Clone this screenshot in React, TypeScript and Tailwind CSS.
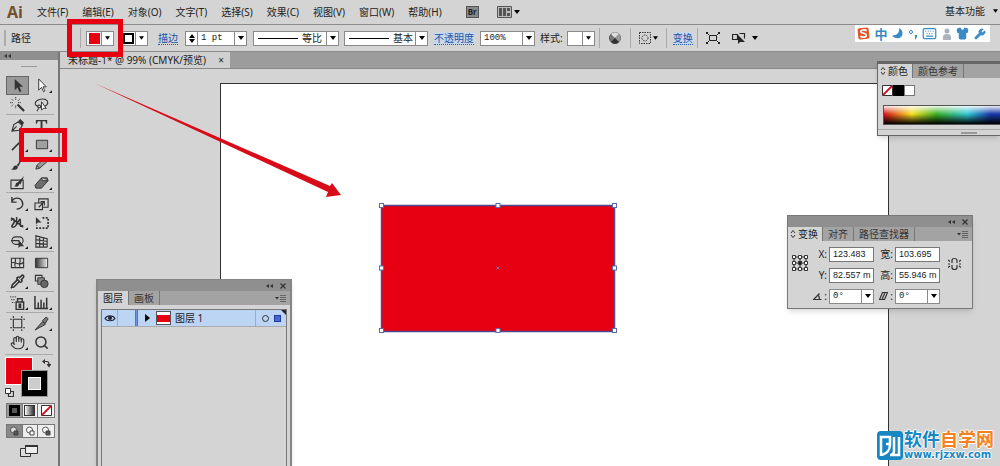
import { useState, type ReactNode } from "react";
import { Hand, Keyboard, Pipette, Search, Shirt, Wrench } from "lucide-react";
import clsx from "clsx";

const MENUS = ["文件(F)", "编辑(E)", "对象(O)", "文字(T)", "选择(S)", "效果(C)", "视图(V)", "窗口(W)", "帮助(H)"];

type Tool = { name: string; icon: ReactNode; flyout?: boolean };

const line = { fill: "none", stroke: "currentColor", strokeWidth: 1.2 };

const TOOL_GROUPS: Tool[][] = [
  [
    { name: "选择", icon: <path d="M5 1v12l3-3 2.2 5 2-1-2.2-4.6h4z" fill="currentColor" /> },
    { name: "直接选择", flyout: true, icon: <path d="M5 1v12l3-3 2 4.6 1.6-.8-2-4.4H13z" fill="#fff" stroke="currentColor" /> },
    {
      name: "魔棒",
      icon: (
        <>
          <path d="m8 8 7 7" stroke="currentColor" strokeWidth="2.4" />
          <path d="M6 0v3m0 6v3M0 6h3m5.5 0h3M1.5 2l2 2m5 0 2-2m-9 8 2-2" stroke="currentColor" strokeDasharray="1.5 .6" />
        </>
      ),
    },
    {
      name: "套索",
      icon: (
        <>
          <path d="M4 10C1 9 0 6 3 4s9-3 11 0-1 6-4 6M4 10c0-2 3-2 3 0s-3 2-3 0Zm1 1c0 2-1 3-2 4" {...line} />
          <path d="M8 5v9l2-2 3 .2z" fill="#fff" stroke="currentColor" />
        </>
      ),
    },
  ],
  [
    {
      name: "钢笔",
      flyout: true,
      icon: (
        <>
          <path d="m2 14 2-7 5-3 4 4-3 5-8 1Zm0 0 5-5" {...line} />
          <path d="m9 3 2-2 4 4-2 3z" fill="currentColor" />
        </>
      ),
    },
    { name: "文字", flyout: true, icon: <path d="M2 2h12v4h-1l-1-2.5H9V13l2 .5v1H5v-1l2-.5V3.5H4L3 6H2z" fill="currentColor" /> },
    { name: "直线段", flyout: true, icon: <path d="m2 14 12-12" stroke="currentColor" strokeWidth="1.6" /> },
    { name: "矩形", flyout: true, icon: <path d="M2.5 3.5h12v9h-12z" fill="#a0a0a0" stroke="currentColor" /> },
    {
      name: "画笔",
      icon: (
        <>
          <path d="M1 14c3 0 2-4 5-4 3 0 3 3 1 4s-4 1-6 0Z" fill="currentColor" />
          <path d="m7 10 7-9-5 10z" fill="currentColor" />
        </>
      ),
    },
    { name: "铅笔", flyout: true, icon: <path d="m2 14 1-4 9-8 3 3-9 8-4 1Zm1-4 3 3" fill="#999" stroke="currentColor" /> },
    {
      name: "斑点画笔",
      icon: (
        <>
          <path d="M1 5.5h13v9H1z" {...line} />
          <path d="M4 12c3 0 1-4 4-4s2 4-1 4.5zM8 8l7-7-4 9z" fill="currentColor" />
        </>
      ),
    },
    { name: "橡皮擦", flyout: true, icon: <path d="m1 11 7-8h6l1 3-7 8H2zM8 3l1 3h6" fill="#6d6d6d" stroke="currentColor" /> },
  ],
  [
    { name: "旋转", flyout: true, icon: <path d="M2 6C4 1 11 1 13 6s-2 8-6 8M2 1v5.5h5" {...line} strokeWidth="1.5" /> },
    { name: "比例缩放", flyout: true, icon: <path d="M1 7.5h8v7H1zM5 7V3h10v9H9m-4 0 6-6m-4 0h4v4" {...line} /> },
    { name: "宽度", flyout: true, icon: <path d="M1 6c3-5 5 1 2 4s1 5 4 0 4-8 4-3-1 6 3 4M1 3l13 10M7 2v9" {...line} strokeWidth="1.6" /> },
    {
      name: "自由变换",
      icon: (
        <>
          <path d="M2 2v8l2-2h4z" fill="currentColor" />
          <path d="M9 3h6v11H3v-3" {...line} strokeWidth="1.8" strokeDasharray="2 1.5" />
        </>
      ),
    },
    {
      name: "形状生成器",
      flyout: true,
      icon: (
        <>
          <path d="M6 3a4 4 0 1 0 0 8h4a4 4 0 0 0 0-8zM1 7h9" {...line} />
          <path d="M9 6v9l2-2h4z" fill="currentColor" />
        </>
      ),
    },
    { name: "透视网格", flyout: true, icon: <path d="M2 1v13h12M6 2v12M10 4v10M2 2l12 3v9M2 6l12 2M2 10l12 1" {...line} /> },
  ],
  [
    { name: "网格", icon: <path d="M1.5 3.5h13v10h-13zM1 9c4-4 8 4 13-1M5 3c3 4-2 6 1 11m4-11c3 4-2 6 1 11" {...line} /> },
    { name: "渐变", icon: <path d="M1.5 3.5h13v10h-13z" fill="url(#ramp)" stroke="currentColor" /> },
    { name: "吸管", flyout: true, icon: <Pipette width={16} height={16} strokeWidth={2.4} /> },
    {
      name: "混合",
      icon: (
        <>
          <path d="M1.5 1.5h7v6h-7z" {...line} />
          <path d="M4 4h7v7H4z" fill="#888" stroke="currentColor" />
          <circle cx="11" cy="10.5" r="4" fill="#666" stroke="currentColor" />
        </>
      ),
    },
  ],
  [
    {
      name: "符号喷枪",
      flyout: true,
      icon: (
        <>
          <path d="M6.5 7.5h8v8h-8zM8 7V4h5v3" {...line} strokeWidth="1.5" />
          <path d="M9 9h3v5H9z" fill="currentColor" />
          <path d="M0 2h7M1 5h5M2 8h3" stroke="currentColor" strokeDasharray="1.5 1" />
        </>
      ),
    },
    { name: "柱形图", flyout: true, icon: <path d="M1 1v13.5h14M4.5 14V8M7.5 14V5m3 9V8m3 6V3" {...line} strokeWidth="1.6" /> },
  ],
  [
    { name: "画板", icon: <path d="M3.5 3.5h9v9h-9zM3.5 0v2m9-2v2m-9 12v2m9-2v2M0 3.5h2m12 0h2m-16 9h2m12 0h2" {...line} /> },
    { name: "切片", flyout: true, icon: <path d="m1 15 8-9 3 3zM9 5l4-4 2 2-3 5z" fill="#777" stroke="currentColor" /> },
    { name: "抓手", flyout: true, icon: <Hand width={16} height={16} strokeWidth={1.8} /> },
    { name: "缩放", icon: <Search width={16} height={16} strokeWidth={2.4} /> },
  ],
];

function Triangle({ className }: { className?: string }) {
  return (
    <svg viewBox="0 0 6 4" className={clsx("h-1 w-1.5 shrink-0 fill-black", className)}>
      <path d="M0 0h6L3 4z" />
    </svg>
  );
}

function Combo({ label, value, className, rule }: { label: string; value: string; className: string; rule?: boolean }) {
  return (
    <div className={clsx("flex h-[15px] shrink-0 items-stretch border border-[#8a8a8a] bg-white", className)}>
      {rule && <span className="my-auto ml-1 h-px w-10 shrink-0 bg-black" />}
      <select
        aria-label={label}
        className={clsx(
          "min-w-0 flex-1 appearance-none bg-transparent leading-3 outline-none",
          rule ? "pl-1 text-[10px]" : "pl-[3px] font-['Liberation_Mono',monospace] text-[9px]",
        )}
      >
        <option>{value}</option>
      </select>
      <span className="flex w-3 shrink-0 items-center justify-center border-l border-[#8a8a8a]">
        <Triangle />
      </span>
    </div>
  );
}

function SwatchButton({ label, children }: { label: string; children?: ReactNode }) {
  return (
    <button aria-label={label} className="flex h-[15px] w-7 shrink-0 border border-[#8a8a8a] bg-white">
      <span className="flex h-full flex-1 items-center justify-center">{children}</span>
      <span className="flex h-full w-3 items-center justify-center border-l border-[#8a8a8a]">
        <Triangle className="w-[5px]" />
      </span>
    </button>
  );
}

function Divider() {
  return <span className="h-5 w-px shrink-0 bg-[#aaa]" />;
}

function MenuBar() {
  return (
    <header className="flex h-[25px] shrink-0 items-center border-b border-[#8c8c8c] pr-0.5">
      <span className="w-[30px] pl-[7px] font-['Open_Sans',sans-serif] text-base font-bold text-[#71502d]">Ai</span>
      <nav className="flex gap-[14px] pl-[7px]">
        {MENUS.map((m) => (
          <button key={m} className="whitespace-nowrap">
            {m}
          </button>
        ))}
      </nav>
      <button className="ml-6 flex h-3 w-[13px] items-center justify-center border border-[#555] bg-[#888] text-[8px] font-bold text-[#222]">Br</button>
      <button aria-label="排列文档" className="ml-[18px] flex items-center gap-0.5">
        <svg viewBox="0 0 15 12" className="h-3 w-[15px]">
          <path d="M.5.5h14v11H.5z" fill="#bbb" stroke="#555" />
          <path d="M2 2h3v8H2zm4 0h3v8H6zm4 0h3v3h-3zm0 5h3v3h-3z" fill="#555" />
        </svg>
        <Triangle />
      </button>
      <button className="ml-auto flex items-center gap-2 pb-0.5">
        基本功能
        <Triangle className="w-[5px]" />
      </button>
    </header>
  );
}

function ControlBar() {
  return (
    <div className="flex h-[27px] shrink-0 items-center border-b border-[#8c8c8c] whitespace-nowrap">
      <span className="ml-1 h-4 w-0.5 bg-[#aaa]" />
      <span className="w-[74px] pl-[5px]">路径</span>
      <Divider />
      <div className="flex gap-1.5 pl-[5px]">
        <SwatchButton label="填色">
          <span className="size-[11px] bg-[#e60012]" />
        </SwatchButton>
        <SwatchButton label="描边颜色">
          <span className="size-[11px] border-2 border-black bg-white" />
        </SwatchButton>
      </div>
      <a href="#stroke" className="ml-2.5 border-b border-dotted border-[#2a5db0] leading-3 text-[#1d54a8]">
        描边
      </a>
      <button
        aria-label="调整描边粗细"
        className="ml-[7px] flex h-[15px] w-3 shrink-0 flex-col items-center justify-between border border-r-0 border-[#8a8a8a] bg-white py-0.5"
      >
        <Triangle className="rotate-180" />
        <Triangle />
      </button>
      <Combo label="描边粗细" value="1 pt" className="w-[50px]" />
      <Combo label="变量宽度" value="等比" className="ml-1.5 w-[86px]" rule />
      <Combo label="画笔定义" value="基本" className="ml-[5px] w-[84px]" rule />
      <a href="#opacity" className="ml-1.5 border-b border-dotted border-[#2a5db0] bg-[#c7d7ec] leading-3 text-[#1d54a8]">
        不透明度
      </a>
      <Combo label="不透明度值" value="100%" className="ml-1.5 w-[55px]" />
      <span className="mr-1 ml-[5px]">样式:</span>
      <SwatchButton label="图形样式" />
      <div className="flex items-center gap-2 pl-1">
        <Divider />
        <button aria-label="重新着色图稿">
          <svg viewBox="0 0 14 14" className="size-[14px]">
            <circle cx="7" cy="7" r="5.5" fill="#777" stroke="#555" />
            <path d="M7 7 3 3a5.500 5.500 0 0 1 8 0z" fill="#ddd" />
            <path d="m7 7 4-4a5.500 5.500 0 0 1 0 8z" fill="#999" />
            <path d="m7 7 4 4a5.500 5.500 0 0 1-8 0z" fill="#333" />
          </svg>
        </button>
        <Divider />
        <button aria-label="选择类似对象" className="flex items-center gap-0.5">
          <svg viewBox="0 0 12 12" className="size-3">
            <path d="M.5.5h11v11H.5z" fill="none" stroke="#333" strokeDasharray="1.5 1" />
            <circle cx="6" cy="6" r="3" fill="none" stroke="#333" strokeDasharray="1.5 1" />
          </svg>
          <Triangle className="w-[5px]" />
        </button>
        <Divider />
      </div>
      <a href="#transform" className="mr-1 ml-1.5 border-b border-dotted border-[#2a5db0] bg-[#c7d7ec] leading-3 text-[#1d54a8]">
        变换
      </a>
      <Divider />
      <button aria-label="隔离选中的对象" className="ml-2">
        <svg viewBox="0 0 14 12" className="h-3 w-[14px]">
          <path d="M3.5 3.5h7v5h-7zM1 1l2 2m10-2-2 2M1 11l2-2m10 2-2-2" {...line} strokeWidth="1" />
          <path d="M0 0h2v2H0zm12 0h2v2h-2zM0 10h2v2H0zm12 0h2v2h-2z" fill="#222" />
        </svg>
      </button>
      <button aria-label="编辑剪切" className="ml-3 flex items-center gap-1.5">
        <svg viewBox="0 0 14 12" className="h-3 w-[14px]">
          <path d="M.5 2.500h5v5h-5zM7.500 1.500h5v5" {...line} />
          <path d="M6 3v9l2-2h5z" fill="#222" />
        </svg>
        <Triangle />
      </button>
    </div>
  );
}

function ToolPanel() {
  const [active, setActive] = useState("选择");
  return (
    <aside className="flex w-[60px] shrink-0 flex-col border-r-2 border-[#777]">
      <div className="flex h-2 items-center bg-[#8f8f8f] pl-1 text-[#333]">
        <CollapseIcon />
      </div>
      <span className="mx-auto mt-1.5 mb-[9px] h-px w-4 bg-[#999]" />
      <div className="pr-1 pl-1.5">
        {TOOL_GROUPS.map((group, i) => (
          <div key={i} className={clsx("grid grid-cols-2", i > 0 && "border-t border-[#aaa] pt-px")}>
            {group.map((tool) => (
              <button
                key={tool.name}
                aria-label={tool.name}
                onClick={() => setActive(tool.name)}
                className={clsx(
                  "flex h-[19px] w-[23px] items-center justify-center text-[#333]",
                  active === tool.name && "border border-[#666] bg-[#999]",
                )}
              >
                <svg viewBox="0 0 21 16" className="h-[15px] w-5 shrink-0">
                  <g transform="translate(2 0)">{tool.icon}</g>
                  {tool.flyout && <path d="M21 13v3h-3z" fill="#111" />}
                </svg>
              </button>
            ))}
          </div>
        ))}
      </div>

      <div className="relative mx-[5px] mt-0.5 h-[43px] border-t border-[#aaa]">
        <button aria-label="填色" className="absolute top-0.5 left-0 size-7 border border-white bg-[#e60012]" />
        <button aria-label="描边" className="absolute top-[15px] left-4 size-[27px] border border-[#999] bg-black p-1.5">
          <span className="block size-full border border-white bg-[#ccc]" />
        </button>
        <svg viewBox="0 0 9 9" className="absolute top-1 right-0.5 size-[9px] text-[#333]">
          <path d="M2 2.500h3q2 0 2 3" {...line} />
          <path d="M3 0 0 2.500 3 5zM4.500 5h5L7 8.500z" fill="currentColor" />
        </svg>
        <svg viewBox="0 0 9 9" className="absolute bottom-0 left-0 size-[9px] text-[#333]">
          <path d="M3.500 3.500h5v5h-5z" {...line} />
          <path d="M.5.5h5v5h-5z" fill="#fff" stroke="#333" />
        </svg>
      </div>

      <div className="mx-1.5 mt-1.5 grid h-[15px] w-[49px] grid-cols-3 divide-x divide-[#777] border border-[#777] bg-[#eee]">
        <button aria-label="颜色" className="flex items-center justify-center bg-[#999]">
          <span className="size-[11px] border-[3px] border-black bg-[#555]" />
        </button>
        <button aria-label="渐变" className="flex items-center justify-center">
          <span className="size-[11px] border border-[#333] bg-linear-to-r from-white to-[#333]" />
        </button>
        <button aria-label="无" className="flex items-center justify-center">
          <NoneSwatch />
        </button>
      </div>
      <div className="mx-1.5 mt-1.5 grid h-[14px] w-[49px] grid-cols-3 divide-x divide-[#777] border border-[#777] bg-[#eee]">
        {["正常绘图", "背面绘图", "内部绘图"].map((mode, i) => (
          <button key={mode} aria-label={mode} className={clsx("flex items-center justify-center", i === 0 && "bg-[#888]")}>
            <svg viewBox="0 0 10 10" className="size-[10px]">
              <circle cx="4.500" cy="4" r="3" fill={i === 0 ? "#ddd" : "#fff"} stroke="#555" />
              <path d="M5 5h4v4H5z" fill={i === 1 ? "#fff" : "#555"} stroke="#444" />
            </svg>
          </button>
        ))}
      </div>
      <button aria-label="更改屏幕模式" className="mx-auto mt-1.5">
        <svg viewBox="0 0 18 14" className="h-[14px] w-[18px] text-[#333]">
          <path d="M.5 4.500h10v8H.5z" fill="#ddd" stroke="currentColor" />
          <path d="M5.500 1.500h12v8h-12z" fill="#eee" stroke="currentColor" />
          <path d="M5 1h13v2H5z" fill="currentColor" />
        </svg>
      </button>
    </aside>
  );
}

function NoneSwatch() {
  return (
    <svg viewBox="0 0 11 11" className="size-[11px]">
      <path d="M.5.5h10v10H.5z" fill="#fff" stroke="#333" />
      <path d="m1 10 9-9" stroke="#d01020" strokeWidth="1.8" />
    </svg>
  );
}

function CollapseIcon() {
  return (
    <svg viewBox="0 0 7 4" className="h-1 w-[7px] fill-current">
      <path d="M3 0v4L0 2zM7 0v4L4 2z" />
    </svg>
  );
}

function PanelTitle() {
  return (
    <div className="flex h-[11px] items-center justify-end gap-[7px] bg-[#8f8f8f] pr-1 text-[#333]">
      <button aria-label="折叠">
        <CollapseIcon />
      </button>
      <button aria-label="关闭">
        <svg viewBox="0 0 6 6" className="size-1.5">
          <path d="m.5.5 5 5m0-5-5 5" {...line} />
        </svg>
      </button>
    </div>
  );
}

function PanelTabs({ tabs, arrows, menu }: { tabs: string[]; arrows?: boolean; menu?: boolean }) {
  return (
    <div role="tablist" className="flex h-[14px] items-stretch bg-[#a3a3a3]">
      {tabs.map((tab, i) => (
        <button
          key={tab}
          role="tab"
          aria-selected={i === 0}
          className={clsx(
            "flex items-center gap-0.5 border-r border-[#777] leading-3 whitespace-nowrap",
            i === 0 ? "bg-[#d4d4d4]" : "text-[#333]",
            i === 0 && arrows ? "pr-1 pl-0.5" : "px-[5px]",
          )}
        >
          {i === 0 && arrows && (
            <svg viewBox="0 0 6 8" className="h-2 w-1.5">
              <path d="M1 3l2-2.500L5 3M1 5l2 2.500L5 5" fill="none" stroke="#333" />
            </svg>
          )}
          {tab}
        </button>
      ))}
      {menu && (
        <button aria-label="面板菜单" className="mr-1 ml-auto">
          <svg viewBox="0 0 11 7" className="h-[7px] w-[11px]">
            <path d="M0 2h4L2 4.500z" fill="#333" />
            <path d="M5 .5h6M5 2.500h6M5 4.500h6M5 6.500h6" stroke="#666" />
          </svg>
        </button>
      )}
    </div>
  );
}

function LayersPanel() {
  return (
    <section className="absolute top-[279px] bottom-0 left-24 flex w-[196px] flex-col border-2 border-t border-b-0 border-[#858585] bg-[#d4d4d4] shadow-md">
      <PanelTitle />
      <PanelTabs tabs={["图层", "画板"]} menu />
      <div className="mx-[3px] mt-1 flex-1 border border-b-0 border-[#777]">
        <div className="flex h-[17px] items-stretch border-b border-[#aaa] bg-[#bcd5f5]">
          <button aria-label="切换可视性" className="flex w-4 items-center justify-center border-r border-[#93add0]">
            <svg viewBox="0 0 12 8" className="h-2 w-3 text-[#223]">
              <path d="M1 4.500C3 1 9 1 11 4.500 9 7.500 3 7.500 1 4.500Z" {...line} />
              <circle cx="6" cy="4" r="2" fill="currentColor" />
            </svg>
          </button>
          <span className="ml-[17px] w-[3px] border-x border-[#4c74d8] bg-[#6f93e6]" />
          <button aria-label="展开图层" className="flex w-[18px] items-center justify-center">
            <svg viewBox="0 0 5 8" className="h-2 w-[5px]">
              <path d="M0 0v8l5-4z" />
            </svg>
          </button>
          <span className="my-px flex w-[15px] items-center border border-[#555] bg-white">
            <span className="h-[7px] w-full bg-[#e60012]" />
          </span>
          <span className="flex-1 pl-1 leading-4">图层 1</span>
          <button aria-label="定位图层" className="flex w-[19px] items-center justify-center border-l border-[#93add0]">
            <span className="size-[7px] rounded-full border border-[#333]" />
          </button>
          <span className="mt-[5px] size-[7px] border border-[#1d3a9c] bg-[#4668d0]" />
          <svg viewBox="0 0 5 5" className="size-[5px]">
            <path d="M0 0h5v5z" fill="#223" />
          </svg>
        </div>
      </div>
    </section>
  );
}

function Field({ label, value }: { label: string; value: string }) {
  return (
    <label className="flex h-[14px] items-center justify-end gap-0.5">
      <span>{label}:</span>
      <input
        defaultValue={value}
        className="h-[15px] w-[45px] border border-[#777] bg-white pl-[3px] font-['Liberation_Sans',sans-serif] text-[9px] leading-3 outline-none"
      />
    </label>
  );
}

function TransformPanel() {
  return (
    <section className="absolute top-[215px] left-[787px] w-[186px] border border-[#777] bg-[#d4d4d4] shadow-md">
      <PanelTitle />
      <PanelTabs tabs={["变换", "对齐", "路径查找器"]} arrows menu />
      <div className="flex items-start pt-1.5 pb-[5px] pl-1">
        <svg viewBox="0 0 16 16" className="mt-2 size-4 text-[#333]">
          {[0.5, 6.5, 12.5].map((y) =>
            [0.5, 6.5, 12.5].map((x) => (
              <path key={`${x}-${y}`} d={`M${x} ${y}h3v3h-3z`} fill={x === 6.5 && y === 6.5 ? "#222" : "#fff"} stroke="currentColor" />
            )),
          )}
          <path d="M4 2h2m4 0h2M4 8h2m4 0h2M4 14h2m4 0h2M2 4v2m0 4v2M8 4v2m0 4v2m6-8v2m0 4v2" {...line} />
        </svg>
        <div className="grid w-[132px] grid-cols-2 gap-y-[7px]">
          <Field label="X" value="123.483" />
          <Field label="宽" value="103.695" />
          <Field label="Y" value="82.557 m" />
          <Field label="高" value="55.946 m" />
          <div className="flex h-[14px] items-center justify-end gap-0.5">
            <svg viewBox="0 0 9 8" className="h-2 w-[9px] text-[#333]">
              <path d="M8.500 7.500h-8l6-6M5 3q2 2 1 4" {...line} />
            </svg>
            <span>:</span>
            <Combo label="旋转" value="0°" className="w-[45px]" />
          </div>
          <div className="flex h-[14px] items-center justify-end gap-0.5">
            <svg viewBox="0 0 9 8" className="h-2 w-[9px] text-[#333]">
              <path d="m.5 7.500 3-7h5l-3 7zM3 7.500l3-7" {...line} />
            </svg>
            <span>:</span>
            <Combo label="倾斜" value="0°" className="w-[45px]" />
          </div>
        </div>
        <button aria-label="约束宽度和高度比例" className="mt-2.5 ml-2">
          <svg viewBox="0 0 13 14" className="h-[14px] w-[13px] text-[#333]">
            <path d="M4 6V3.500q0-2 2.500-2T9 3.500V6M4 8v2.500q0 2 2.500 2t2.500-2V8M0 3l2 1.500m-2 6L2 9m11-6-2 1.500m2 6L11 9M0 7h2m9 0h2" {...line} />
          </svg>
        </button>
      </div>
    </section>
  );
}

function ColorPanel() {
  return (
    <section className="absolute top-[61px] right-0 w-[123px] border border-t-[3px] border-r-0 border-[#666] bg-[#d4d4d4] shadow-md">
      <PanelTabs tabs={["颜色", "颜色参考"]} arrows />
      <div className="flex pt-[7px] pl-1">
        <NoneSwatch />
        <button aria-label="黑色" className="size-[11px] bg-black" />
        <button aria-label="白色" className="size-[11px] border border-[#777] bg-white" />
      </div>
      <div className="mt-[9px] ml-[5px] h-5 border border-r-0 border-[#555] bg-[linear-gradient(to_bottom,rgba(255,255,255,.9),transparent_45%,#000),linear-gradient(to_right,#d8101c,#f8e020_24%,#3cb020_45%,#30c8d8_72%,#1838a8_92%)]" />
      <div className="mt-1 flex h-1.5 items-center justify-center border-t border-[#aaa] pl-[60px]">
        <span className="h-0.5 w-4 bg-[#999]" />
      </div>
    </section>
  );
}

function InputMethodBar() {
  return (
    <div className="absolute top-[25px] right-[10px] flex h-[17px] w-[135px] items-center justify-between bg-white pr-1 pl-0.5 text-[#3a8ac4]">
      <svg viewBox="0 0 14 14" className="size-[13px]">
        <rect x="1" y="1" width="12" height="12" rx="2" fill="#e0572a" transform="rotate(-6 7 7)" />
        <path d="M10.500 4C8 2.500 4 3 4 5s6 1.500 6 3.800S6 11.500 3.500 10" fill="none" stroke="#fff" strokeWidth="1.8" />
      </svg>
      <span className="text-[13px] leading-4 font-bold">中</span>
      <svg viewBox="0 0 11 11" className="size-[11px] fill-current">
        <path d="M7 0c1 4-2 8-7 7.500C3 12 11 11 10.500 5 10.300 2.500 9 1 7 0Z" />
      </svg>
      <svg viewBox="0 0 10 12" className="h-3 w-2.5">
        <circle cx="3" cy="4" r="1.5" fill="none" stroke="currentColor" />
        <path d="M7 7h2v2l-2 3z" fill="currentColor" />
      </svg>
      <Keyboard className="size-[15px]" />
      <svg viewBox="0 0 10 12" className="h-3 w-2.5 fill-[#aab2ba]">
        <circle cx="5" cy="3" r="2.5" />
        <path d="M1 12V9q0-3 4-3t4 3v3z" />
      </svg>
      <Shirt className="size-[13px] fill-current" />
      <Wrench className="size-3 fill-current" />
    </div>
  );
}

function Canvas() {
  return (
    <div className="relative flex-1 overflow-hidden">
      <div className="absolute top-[14px] -bottom-px left-40 w-[669px] border border-[#333] bg-white" />
      <svg viewBox="0 0 240 132" className="absolute top-[133px] left-[318px] h-[132px] w-60">
        <rect x="3.5" y="3.5" width="233" height="126" fill="#e60012" stroke="#4d4890" strokeWidth="1.5" />
        {[3.5, 120, 236.5].map((x) =>
          [3.5, 66, 128.5].map((y) =>
            x === 120 && y === 66 ? null : <rect key={`${x}-${y}`} x={x - 2} y={y - 2} width="4" height="4" fill="#fff" stroke="#5a68a8" />,
          ),
        )}
        <path d="m118.500 64.500 3 3m0-3-3 3" stroke="#8a6fc0" />
      </svg>
    </div>
  );
}

function SiteMark() {
  return (
    <a href="#site" className="absolute right-[6px] bottom-[5px] flex items-center gap-px">
      <svg viewBox="0 0 26 29" className="h-[29px] w-[26px]">
        <rect width="26" height="29" rx="4" fill="#1787c4" />
        <path d="M4 25V6h9v7H9m4 0c0 6-2 9-8 11M17 6v14q0 4-4 4h9V6" fill="none" stroke="#fff" strokeWidth="2.5" />
      </svg>
      <span className="flex flex-col [text-shadow:1px_0_#fff,-1px_0_#fff,0_1px_#fff,0_-1px_#fff]">
        <span className="text-lg leading-5 font-bold whitespace-nowrap text-[#1787c4]">
          软件<span className="text-[#f58220]">自学网</span>
        </span>
        <span className="font-['DejaVu_Sans',sans-serif] text-[10px] leading-3 font-bold text-[#1787c4]">www.rjzxw.com</span>
      </span>
    </a>
  );
}

export default function App() {
  return (
    <div className="relative flex h-screen flex-col overflow-hidden bg-[#d4d4d4] font-['Noto_Sans','Noto_Sans_CJK_SC',sans-serif] text-[10px] text-[#222]">
      <svg className="absolute size-0">
        <linearGradient id="ramp">
          <stop stopColor="#333" />
          <stop offset="1" stopColor="#eee" />
        </linearGradient>
      </svg>
      <MenuBar />
      <ControlBar />
      <div className="flex min-h-0 flex-1">
        <ToolPanel />
        <main className="flex min-w-0 flex-1 flex-col">
          <div className="flex h-[17px] shrink-0 border-b border-[#888] bg-[#9c9c9c]">
            <div className="flex w-[170px] items-center justify-between bg-[#d0d0d0] pr-1.5 pl-2 whitespace-nowrap">
              <span>未标题-1* @ 99% (CMYK/预览)</span>
              <button aria-label="关闭文档">×</button>
            </div>
          </div>
          <Canvas />
        </main>
      </div>

      <LayersPanel />
      <TransformPanel />
      <ColorPanel />
      <InputMethodBar />
      <SiteMark />

      {/* tutorial callouts */}
      <div className="pointer-events-none absolute top-[19px] left-[67px] h-[38px] w-14 border-[5px] border-[#e60012]" />
      <div className="pointer-events-none absolute top-32 left-[19px] h-[34px] w-12 border-[5px] border-[#e60012]" />
      <svg viewBox="0 0 250 116" className="pointer-events-none absolute top-[82px] left-[93px] h-[116px] w-[250px]">
        <path d="m1 1 236 103 2-3 9 12-15 2 2-5z" fill="#d80c18" />
      </svg>
    </div>
  );
}
